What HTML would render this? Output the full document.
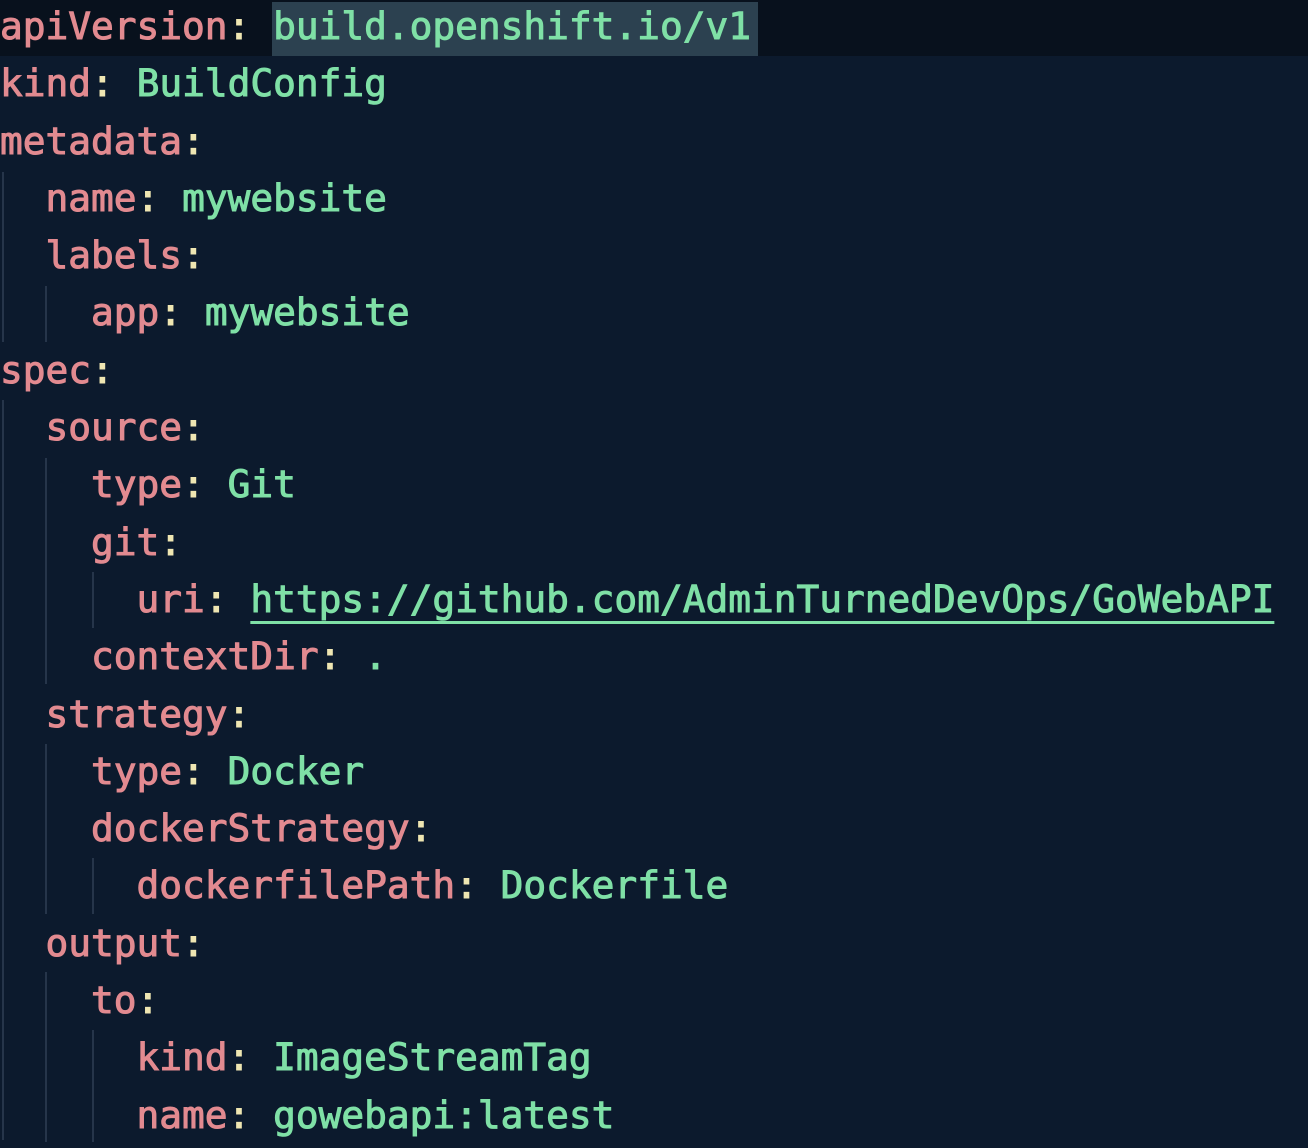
<!DOCTYPE html><html><head><style>
body{margin:0;width:1308px;height:1148px;overflow:hidden;background:#0c1a2d;}
.top{position:absolute;left:0;top:0;width:1308px;height:56px;background:#08111d;}
.hl{position:absolute;left:272px;top:2px;width:486px;height:54px;background:#2c4150;}
pre{position:absolute;left:0;top:-2px;margin:0;font-family:"DejaVu Sans Mono","Liberation Mono",monospace;font-size:37.8px;line-height:57.3px;font-weight:normal;-webkit-text-stroke:1px currentColor;color:#e28a90;}
.v{color:#7fe0a6}.c{color:#efe6b2}.u{text-decoration:underline;text-decoration-thickness:3px;text-underline-offset:9px}
.g{position:absolute;width:2px;background:#26354a;}
</style></head><body>
<div class="top"></div><div class="hl"></div>
<div class="g" style="left:2px;top:172px;height:170px"></div>
<div class="g" style="left:2px;top:400px;height:740px"></div>
<div class="g" style="left:45px;top:286px;height:56px"></div>
<div class="g" style="left:45px;top:458px;height:226px"></div>
<div class="g" style="left:45px;top:744px;height:170px"></div>
<div class="g" style="left:45px;top:972px;height:170px"></div>
<div class="g" style="left:92px;top:572px;height:56px"></div>
<div class="g" style="left:92px;top:858px;height:56px"></div>
<div class="g" style="left:92px;top:1030px;height:112px"></div>
<pre>apiVersion<span class="c">:</span> <span class="v">build.openshift.io/v1</span>
kind<span class="c">:</span> <span class="v">BuildConfig</span>
metadata<span class="c">:</span>
  name<span class="c">:</span> <span class="v">mywebsite</span>
  labels<span class="c">:</span>
    app<span class="c">:</span> <span class="v">mywebsite</span>
spec<span class="c">:</span>
  source<span class="c">:</span>
    type<span class="c">:</span> <span class="v">Git</span>
    git<span class="c">:</span>
      uri<span class="c">:</span> <span class="v u">https://github.com/AdminTurnedDevOps/GoWebAPI</span>
    contextDir<span class="c">:</span> <span class="v">.</span>
  strategy<span class="c">:</span>
    type<span class="c">:</span> <span class="v">Docker</span>
    dockerStrategy<span class="c">:</span>
      dockerfilePath<span class="c">:</span> <span class="v">Dockerfile</span>
  output<span class="c">:</span>
    to<span class="c">:</span>
      kind<span class="c">:</span> <span class="v">ImageStreamTag</span>
      name<span class="c">:</span> <span class="v">gowebapi:latest</span></pre>
</body></html>
